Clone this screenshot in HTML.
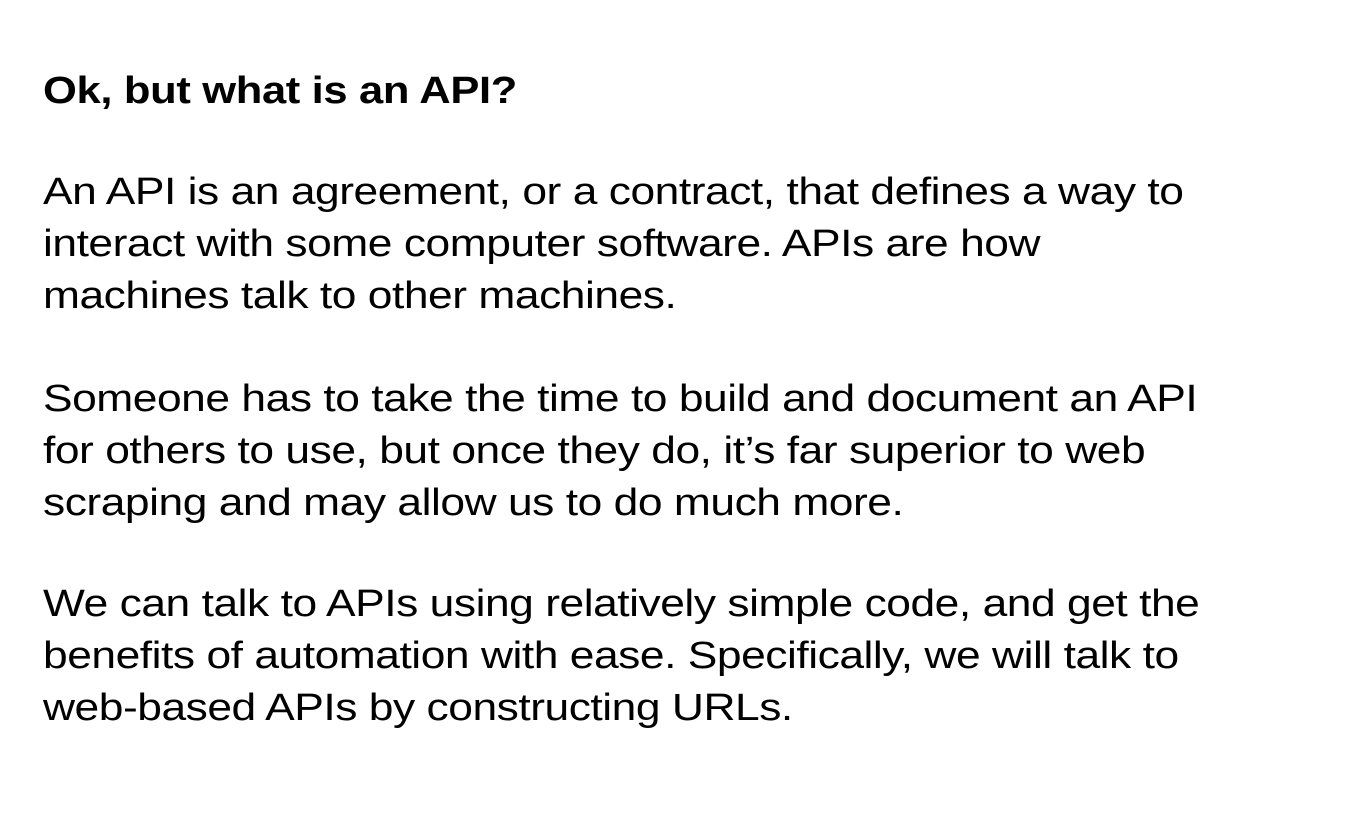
<!DOCTYPE html>
<html><head><style>
html,body{margin:0;padding:0;background:#fff;width:1348px;height:814px;overflow:hidden}
body{font-family:"Liberation Sans",sans-serif;color:#000}
.h{position:absolute;left:43px;top:68px;font-size:38px;font-weight:bold;line-height:46px;letter-spacing:-0.3px;transform:scaleX(1.145);transform-origin:0 0;white-space:nowrap}
.p{position:absolute;left:43px;font-size:38px;line-height:52px;margin:0;letter-spacing:-0.4px;transform:scaleX(1.167);transform-origin:0 0;white-space:nowrap}
</style></head><body>
<div class="h">Ok, but what is an API?</div>
<div class="p" style="top:166px">An API is an agreement, or a contract, that defines a way to<br>interact with some computer software. APIs are how<br>machines talk to other machines.</div>
<div class="p" style="top:373px">Someone has to take the time to build and document an API<br>for others to use, but once they do, it’s far superior to web<br>scraping and may allow us to do much more.</div>
<div class="p" style="top:578px">We can talk to APIs using relatively simple code, and get the<br>benefits of automation with ease. Specifically, we will talk to<br>web-based APIs by constructing URLs.</div>
</body></html>
